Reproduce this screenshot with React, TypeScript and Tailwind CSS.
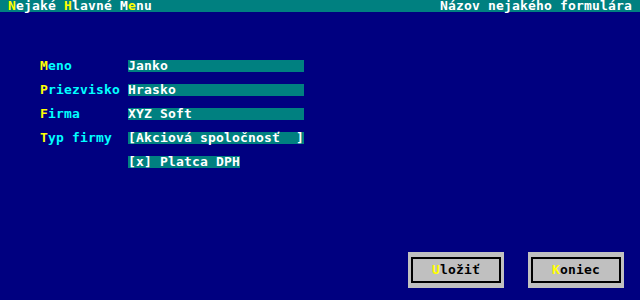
import React from "react";

const font = "font-['DejaVu_Sans_Mono','Liberation_Mono',monospace] font-bold text-[13px] leading-[12px] tracking-[0.17px]";

interface LabelProps {
  text: string;
}

const FieldLabel: React.FC<LabelProps> = ({ text }) => (
  <span className="w-[88px] text-[#00ffff] whitespace-pre">
    <span className="text-[#ffff00]">{text[0]}</span>
    {text.slice(1)}
  </span>
);

const Field: React.FC<{ value: string; width: string }> = ({ value, width }) => (
  <span className={`${width} h-[12px] bg-[#008080] text-white whitespace-pre`}>{value}</span>
);

const DosButton: React.FC<{ label: string }> = ({ label }) => (
  <div className="w-[96px] h-[36px] bg-[#c0c0c0] flex">
    <div className="flex-1 mx-[3px] my-[5px] border-2 border-black flex items-center justify-center text-black">
      <span>
        <span className="text-[#ffff00]">{label[0]}</span>
        {label.slice(1)}
      </span>
    </div>
  </div>
);

export default function App() {
  const rows = [
    { label: "Meno", value: "Janko" },
    { label: "Priezvisko", value: "Hrasko" },
    { label: "Firma", value: "XYZ Soft" },
    { label: "Typ firmy", value: "[Akciová spoločnosť  ]" },
  ];

  return (
    <div className={`w-[640px] h-[300px] bg-[#000080] flex flex-col ${font}`}>
      <div className="h-[12px] bg-[#008080] text-white flex justify-between pl-[8px] pr-[8px]">
        <span className="whitespace-pre">
          <span className="text-[#ffff00]">N</span>ejaké <span className="text-[#ffff00]">H</span>lavné M
          <span className="text-[#ffff00]">e</span>nu
        </span>
        <span>Názov nejakého formulára</span>
      </div>

      <div className="flex flex-col gap-[12px] pt-[48px] pl-[40px]">
        {rows.map((r) => (
          <div key={r.label} className="flex h-[12px]">
            <FieldLabel text={r.label} />
            <Field value={r.value} width="w-[176px]" />
          </div>
        ))}
        <div className="flex h-[12px] pl-[88px]">
          <Field value="[x] Platca DPH" width="w-[112px]" />
        </div>
      </div>

      <div className="flex justify-end gap-[24px] pr-[16px] mt-[84px]">
        <DosButton label="Uložiť" />
        <DosButton label="Koniec" />
      </div>
    </div>
  );
}
